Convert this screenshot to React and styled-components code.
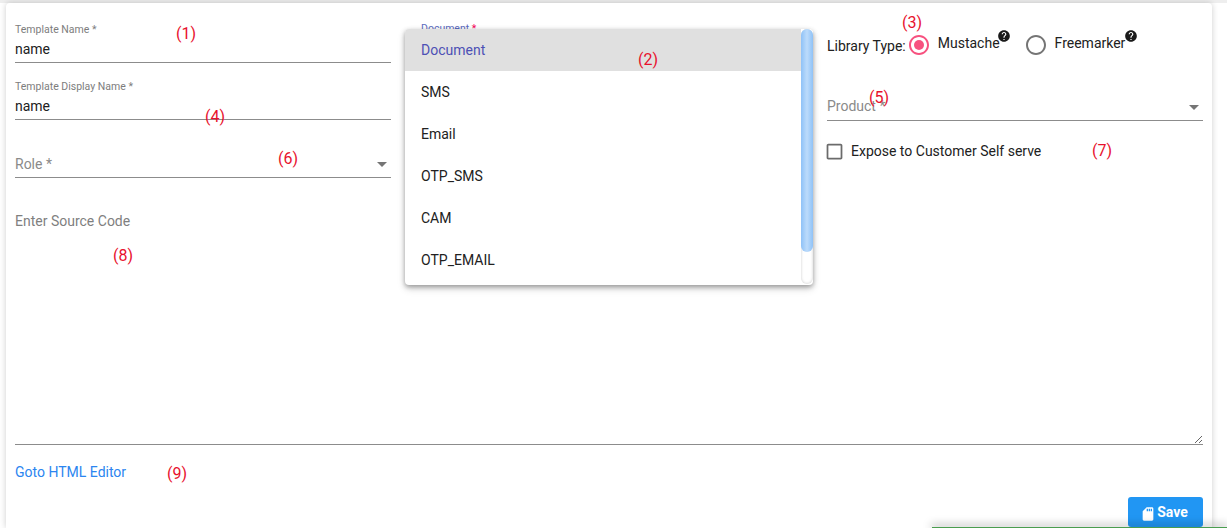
import React from "react";
import styled, { createGlobalStyle } from "styled-components";

const Global = createGlobalStyle`
  html, body { margin: 0; padding: 0; background: #fff; }
  body { font-family: Roboto, "Liberation Sans", sans-serif; overflow: hidden; }
  * { box-sizing: border-box; }
`;

const Page = styled.div`
  position: relative;
  width: 1227px;
  height: 528px;
  overflow: hidden;
  background: #fff;
`;
const TopStrip = styled.div`
  height: 3px;
  background: #eeeeee;
`;
const Card = styled.main`
  width: 1206px;
  height: 525px;
  margin-left: 6px;
  padding: 21px 9px 0;
  background: #fff;
  border-radius: 4px 4px 0 0;
  box-shadow: 0 0 6px rgba(0, 0, 0, 0.2);
`;
const Columns = styled.div`
  display: grid;
  grid-template-columns: repeat(3, 376px);
  column-gap: 30px;
  height: 164px;
`;
const Column = styled.div`
  display: flex;
  flex-direction: column;
`;
const Field = styled.label`
  position: relative;
  display: block;
  height: 39px;
  margin-bottom: ${(p) => p.$gap ?? 18}px;
  border-bottom: 1px solid #8c8c8c;
`;
const SmallLabel = styled.span`
  display: block;
  padding-top: 1px;
  height: 11px;
  font-size: 10.5px;
  line-height: 10px;
  color: #7d7d7d;
`;
const Value = styled.input`
  display: block;
  width: 100%;
  height: 19px;
  margin-top: 5px;
  padding: 0;
  border: 0;
  outline: 0;
  background: transparent;
  font: 400 14px/19px Roboto, sans-serif;
  color: #212121;
`;
const SelectText = styled.span`
  position: absolute;
  left: 0;
  bottom: ${(p) => p.$lift}px;
  font-size: 14px;
  line-height: 18px;
  color: #8a8a8a;
`;
const Caret = styled.svg`
  position: absolute;
  right: -3px;
  bottom: 1px;
  width: 24px;
  height: 24px;
  fill: #757575;
`;
const DocLabel = styled.span`
  display: block;
  font-size: 10.5px;
  line-height: 10px;
  color: #5c6bc0;
  & > b { font-weight: 400; color: #f50057; }
`;
const LibraryRow = styled.div`
  display: flex;
  align-items: flex-start;
  height: 58px;
  padding-top: 7px;
  font-size: 14px;
  color: #212121;
`;
const LibraryLabel = styled.span`
  margin-top: 6px;
  line-height: 18px;
`;
const RadioOption = styled.span`
  display: flex;
  align-items: flex-start;
  margin-left: ${(p) => p.$offset}px;
`;
const RadioIcon = styled.svg`
  width: 24px;
  height: 24px;
  margin-top: 2px;
  fill: ${(p) => (p.$on ? "#f7517f" : "#757575")};
`;
const RadioText = styled.span`
  margin: 3px 0 0 7px;
  line-height: 18px;
`;
const HelpIcon = styled.svg`
  width: 14px;
  height: 14px;
  margin: -2px 0 0 ${(p) => p.$nudge}px;
  fill: #1a1a1a;
`;
const CheckRow = styled.div`
  display: flex;
  align-items: center;
  height: 20px;
  margin-top: 20px;
  font-size: 14px;
  color: #212121;
`;
const CheckIcon = styled.svg`
  width: 21px;
  height: 21px;
  margin: 0 6px 0 -3px;
  fill: #6b6b6b;
`;
const Source = styled.textarea`
  display: block;
  width: 100%;
  height: 236px;
  margin-top: 21px;
  padding: 3px 0 0;
  border: 0;
  border-bottom: 1px solid #8c8c8c;
  outline: 0;
  resize: vertical;
  font: 400 14px/18px Roboto, sans-serif;
  &::placeholder { color: #7f7f7f; opacity: 1; }
`;
const EditorLink = styled.a`
  display: block;
  margin-top: 18px;
  font-size: 14px;
  line-height: 18px;
  color: #2b85f0;
  text-decoration: none;
`;
const Footer = styled.div`
  display: flex;
  justify-content: flex-end;
  margin-top: 16px;
`;
const SaveButton = styled.button`
  display: flex;
  align-items: center;
  justify-content: center;
  width: 75px;
  height: 30px;
  padding: 0 3px 0 0;
  border: 0;
  border-radius: 3px;
  background: #2196f3;
  color: #fff;
  font: 700 14px Roboto, sans-serif;
`;
const SaveIcon = styled.svg`
  width: 16px;
  height: 16px;
  margin: 3px 1px 0 0;
  fill: #fff;
`;
const Menu = styled.div`
  position: absolute;
  left: 405px;
  top: 29px;
  width: 408px;
  height: 256px;
  overflow: hidden;
  background: #fff;
  border-radius: 4px;
  box-shadow: 0 2px 5px rgba(0, 0, 0, 0.35), 0 4px 8px rgba(0, 0, 0, 0.12);
`;
const MenuItem = styled.div`
  height: 42px;
  width: 396px;
  padding-left: 16px;
  font-size: 14px;
  line-height: 42px;
  color: ${(p) => (p.$selected ? "#4d50b5" : "#212121")};
  background: ${(p) => (p.$selected ? "#e0e0e0" : "transparent")};
`;
const ScrollTrack = styled.div`
  position: absolute;
  top: 0;
  right: 0;
  width: 12px;
  height: 255px;
  border-radius: 6px;
  background: #fff;
  box-shadow: inset 0 0 3px rgba(0, 0, 0, 0.2);
`;
const ScrollThumb = styled.div`
  height: 223px;
  border-radius: 6px;
  background: linear-gradient(90deg, #8fc2f7, #bcdbfb 50%, #8fc2f7);
`;
const Note = styled.span`
  position: absolute;
  left: ${(p) => p.$x}px;
  top: ${(p) => p.$y}px;
  transform: translate(-50%, -50%);
  font: 400 16px/18px Roboto, sans-serif;
  color: #e8112d;
`;
const Toast = styled.div`
  position: absolute;
  left: 932px;
  bottom: 0;
  right: 0;
  height: 1px;
  background: #4a9d4f;
  box-shadow: 0 -1px 8px 1px rgba(0, 0, 0, 0.4);
`;

const HELP = "M12 2C6.48 2 2 6.48 2 12s4.48 10 10 10 10-4.48 10-10S17.52 2 12 2zm1 17h-2v-2h2v2zm2.07-7.75l-.9.92C13.45 12.9 13 13.5 13 15h-2v-.5c0-1.1.45-2.1 1.17-2.83l1.24-1.26c.37-.36.59-.86.59-1.41 0-1.1-.9-2-2-2s-2 .9-2 2H8c0-2.21 1.79-4 4-4s4 1.79 4 4c0 .88-.36 1.68-.93 2.25z";
const RING = "M12 2C6.48 2 2 6.48 2 12s4.48 10 10 10 10-4.48 10-10S17.52 2 12 2zm0 18c-4.42 0-8-3.58-8-8s3.58-8 8-8 8 3.58 8 8-3.58 8-8 8z";

const Arrow = () => (
  <Caret viewBox="0 0 24 24"><path d="M7 10l5 5 5-5z" /></Caret>
);
const Radio = ({ on, offset, label, nudge }) => (
  <RadioOption $offset={offset}>
    <RadioIcon viewBox="0 0 24 24" $on={on}>
      <path d={RING} />
      {on && <circle cx="12" cy="12" r="5" />}
    </RadioIcon>
    <RadioText>{label}</RadioText>
    <HelpIcon viewBox="0 0 24 24" $nudge={nudge}><path d={HELP} /></HelpIcon>
  </RadioOption>
);

const items = ["Document", "SMS", "Email", "OTP_SMS", "CAM", "OTP_EMAIL"];
const notes = [
  [186, 34, 1], [648, 60, 2], [912, 23, 3], [215, 117, 4], [879, 98, 5],
  [288, 159, 6], [1102, 151, 7], [123, 256, 8], [177, 474, 9],
];

export default function App() {
  return (
    <Page>
      <Global />
      <TopStrip />
      <Card>
        <Columns>
          <Column>
            <Field>
              <SmallLabel>Template Name *</SmallLabel>
              <Value readOnly value="name" />
            </Field>
            <Field $gap={19}>
              <SmallLabel>Template Display Name *</SmallLabel>
              <Value readOnly value="name" />
            </Field>
            <Field>
              <SelectText $lift={4}>Role *</SelectText>
              <Arrow />
            </Field>
          </Column>
          <Column>
            <DocLabel>Document <b>*</b></DocLabel>
          </Column>
          <Column>
            <LibraryRow>
              <LibraryLabel>Library Type:</LibraryLabel>
              <Radio on offset={1} nudge={-3} label="Mustache" />
              <Radio offset={13} nudge={-1} label="Freemarker" />
            </LibraryRow>
            <Field $gap={0}>
              <SelectText $lift={5}>Product *</SelectText>
              <Arrow />
            </Field>
            <CheckRow>
              <CheckIcon viewBox="0 0 24 24">
                <path d="M19 5v14H5V5h14m0-2H5c-1.1 0-2 .9-2 2v14c0 1.1.9 2 2 2h14c1.1 0 2-.9 2-2V5c0-1.1-.9-2-2-2z" />
              </CheckIcon>
              Expose to Customer Self serve
            </CheckRow>
          </Column>
        </Columns>
        <Source placeholder="Enter Source Code" />
        <EditorLink href="#">Goto HTML Editor</EditorLink>
        <Footer>
          <SaveButton>
            <SaveIcon viewBox="0 0 24 24">
              <path d="M18 2h-8L4.02 8 4 20c0 1.1.9 2 2 2h12c1.1 0 2-.9 2-2V4c0-1.1-.9-2-2-2zm-6 6h-2V4h2v4zm3 0h-2V4h2v4zm3 0h-2V4h2v4z" />
            </SaveIcon>
            Save
          </SaveButton>
        </Footer>
      </Card>
      <Menu>
        {items.map((item, i) => (
          <MenuItem key={item} $selected={i === 0}>{item}</MenuItem>
        ))}
        <ScrollTrack><ScrollThumb /></ScrollTrack>
      </Menu>
      {notes.map(([x, y, n]) => (
        <Note key={n} $x={x} $y={y}>({n})</Note>
      ))}
      <Toast />
    </Page>
  );
}
